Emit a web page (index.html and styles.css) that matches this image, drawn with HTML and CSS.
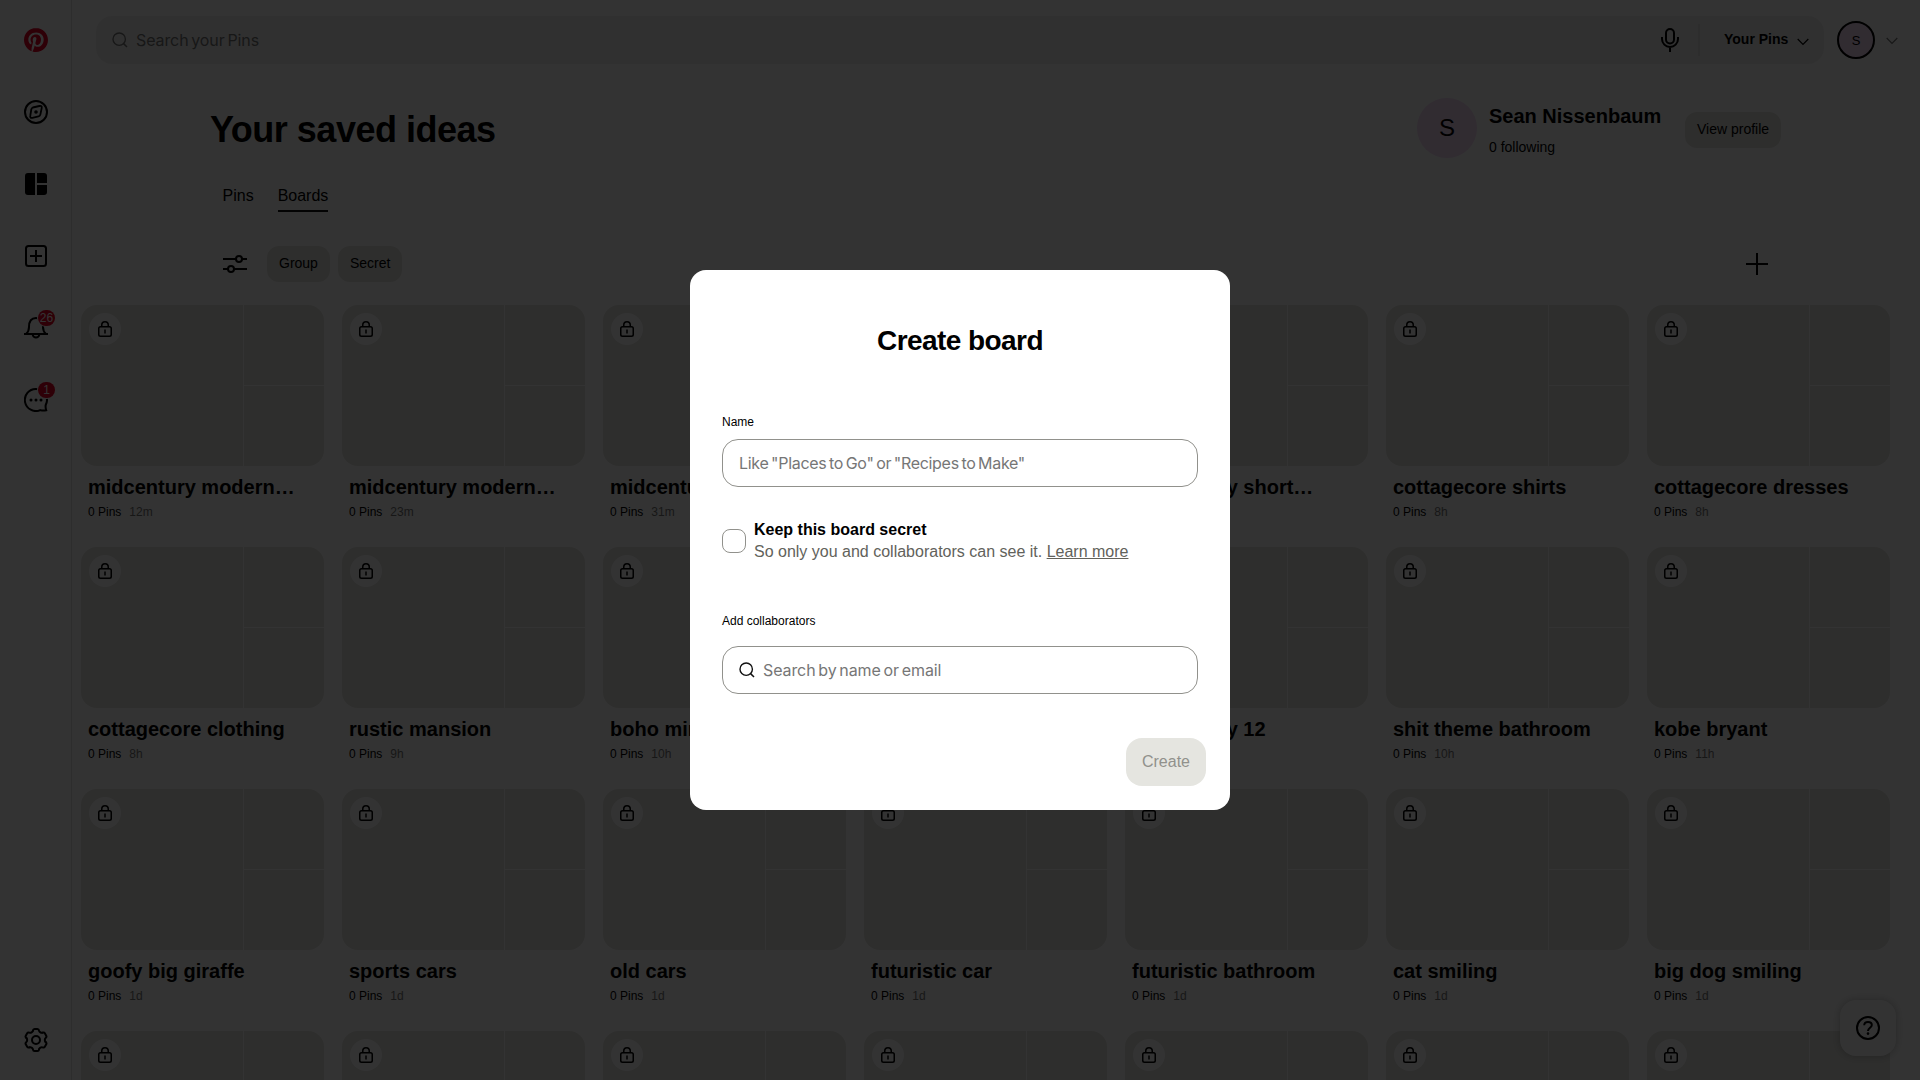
FILE: index.html
```html
<!DOCTYPE html>
<html lang="en">
<head>
<meta charset="utf-8">
<title>Your saved ideas</title>
<link rel="stylesheet" href="styles.css">
</head>
<body>
<svg class="defs" width="0" height="0">
  <symbol id="lock" viewBox="0 0 16 16"><rect x="1.75" y="5.75" width="12.5" height="9.5" rx="1.75" fill="none" stroke="currentColor" stroke-width="1.5"/><path d="M4.75 5.5V4a3.25 3.25 0 0 1 6.5 0v1.5" fill="none" stroke="currentColor" stroke-width="1.5"/><path d="M7.25 8.5h1.5v4h-1.5z" fill="currentColor"/></symbol>
  <symbol id="search" viewBox="0 0 16 16"><circle cx="7.2" cy="7.2" r="6.2" fill="none" stroke="currentColor" stroke-width="1.4"/><path d="M11.6 11.6l3.4 3.4" fill="none" stroke="currentColor" stroke-width="1.5"/></symbol>
  <symbol id="chevron" viewBox="0 0 12 8"><path d="M.7 1L6 6.3 11.3 1" fill="none" stroke="currentColor" stroke-width="1.2"/></symbol>
  <path id="cog-tooth" d="M-3.1-9.300Q-2.800-11-1.400-11H1.400Q2.800-11 3.100-9.300C3.400-7.900 5.140-6.890 6.500-7.330"/>
</svg>

<div class="shell">
  <nav class="sidebar">
    <a class="nav-item"><svg width="24" height="24" viewBox="0 0 24 24"><path fill="#e60023" d="M12.017 0C5.396 0 .029 5.367.029 11.987c0 5.079 3.158 9.417 7.618 11.162-.105-.949-.199-2.403.041-3.439.219-.937 1.406-5.957 1.406-5.957s-.359-.72-.359-1.781c0-1.663.967-2.911 2.168-2.911 1.024 0 1.518.769 1.518 1.688 0 1.029-.653 2.567-.992 3.992-.285 1.193.6 2.165 1.775 2.165 2.128 0 3.768-2.245 3.768-5.487 0-2.861-2.063-4.869-5.008-4.869-3.41 0-5.409 2.562-5.409 5.199 0 1.033.394 2.143.889 2.741.099.12.112.225.085.345-.09.375-.293 1.199-.334 1.363-.053.225-.172.271-.401.165-1.495-.69-2.433-2.878-2.433-4.646 0-3.776 2.748-7.252 7.92-7.252 4.158 0 7.392 2.967 7.392 6.923 0 4.135-2.607 7.462-6.233 7.462-1.214 0-2.354-.629-2.758-1.379l-.749 2.848c-.269 1.045-1.004 2.352-1.498 3.146 1.123.345 2.306.535 3.55.535 6.607 0 11.985-5.365 11.985-11.987C23.97 5.39 18.592.026 11.985.026z"/></svg></a>
    <a class="nav-item"><svg width="24" height="24" viewBox="0 0 24 24" fill="none" stroke="#000" stroke-width="2"><circle cx="12" cy="12" r="11"/><path d="M8.8 7.5l6.6-1.5q2.8-.6 2.3 2.1l-1.3 6.2q-.3 1.7-1.9 2.1l-6.1 1.4q-2.6.5-2.1-2.1l1-6.2q.3-1.6 1.5-2z" stroke-width="1.8"/><circle cx="12" cy="12" r="1.8" fill="#000" stroke="none"/></svg></a>
    <a class="nav-item"><svg width="24" height="24" viewBox="0 0 24 24"><path d="M11 1v22H4a3 3 0 0 1-3-3V4a3 3 0 0 1 3-3zM13 1h7a3 3 0 0 1 3 3v7H13zM13 13h10v7a3 3 0 0 1-3 3h-7z"/></svg></a>
    <a class="nav-item"><svg width="24" height="24" viewBox="0 0 24 24" fill="none" stroke="#000" stroke-width="2"><rect x="2" y="2" width="20" height="20" rx="2.5"/><path d="M12 6v12M6 12h12"/></svg></a>
    <a class="nav-item"><svg width="24" height="24" viewBox="0 0 24 24" fill="none" stroke="#000" stroke-width="2"><path d="M0 18h24"/><path d="M2 18q3-2.5 3-7C5 5 7.500 2 12 2s7 3 7 9q0 4.500 3 7"/><path d="M8.700 18.300a3.300 3.300 0 0 0 6.600 0"/></svg><span class="badge">26</span></a>
    <a class="nav-item"><svg width="24" height="24" viewBox="0 0 24 24"><path d="M12 1a11 11 0 1 0 4.200 21.100q3 .9 6 .2-.9-2.800-.5-5.300A11 11 0 0 0 12 1z" fill="none" stroke="#000" stroke-width="2"/><circle cx="7" cy="12" r="1.500"/><circle cx="12" cy="12" r="1.500"/><circle cx="17" cy="12" r="1.500"/></svg><span class="badge">1</span></a>
    <a class="nav-item settings"><svg width="24" height="24" viewBox="-12 -12 24 24" fill="none" stroke="#000" stroke-width="2" stroke-linecap="round"><use href="#cog-tooth"/><use href="#cog-tooth" transform="rotate(60)"/><use href="#cog-tooth" transform="rotate(120)"/><use href="#cog-tooth" transform="rotate(180)"/><use href="#cog-tooth" transform="rotate(240)"/><use href="#cog-tooth" transform="rotate(300)"/><circle r="4"/></svg></a>
  </nav>

  <main class="main">
    <header class="topbar">
      <div class="searchbar">
        <svg class="search-icon" width="16" height="16"><use href="#search"/></svg>
        <span class="search-text">Search your Pins</span>
        <svg class="mic" width="24" height="24" viewBox="0 0 24 24" fill="none" stroke="#000" stroke-width="2"><rect x="8" y="1" width="8" height="14.500" rx="4"/><path d="M4 9v2a8 8 0 0 0 16 0V9M12 19v5"/></svg>
        <div class="scope"><span>Your Pins</span><svg width="12" height="8"><use href="#chevron"/></svg></div>
      </div>
      <div class="me">S</div>
      <svg class="me-chevron" width="12" height="8"><use href="#chevron"/></svg>
    </header>

    <section class="heading">
      <h1>Your saved ideas</h1>
      <div class="profile">
        <div class="avatar">S</div>
        <div class="who"><div class="name">Sean Nissenbaum</div><div class="following">0 following</div></div>
        <button class="chip">View profile</button>
      </div>
    </section>
    <div class="tabs"><span>Pins</span><span class="active">Boards</span></div>
    <div class="filters">
      <svg width="24" height="24" viewBox="0 0 24 24" fill="none" stroke="#000" stroke-width="2"><path d="M0 7h13M19 7h5M0 17h5M11 17h13"/><circle cx="16" cy="7" r="3"/><circle cx="8" cy="17" r="3"/></svg>
      <button class="chip">Group</button><button class="chip">Secret</button>
      <svg class="plus" width="24" height="24" viewBox="0 0 24 24"><path d="M12 1v22M1 12h22" stroke="#000" stroke-width="2"/></svg>
    </div>

    <section class="boards">
      <article class="board"><div class="cover"><i class="lock"><svg><use href="#lock"/></svg></i></div><h2>midcentury modern…</h2><p>0 Pins<span>12m</span></p></article>
      <article class="board"><div class="cover"><i class="lock"><svg><use href="#lock"/></svg></i></div><h2>midcentury modern…</h2><p>0 Pins<span>23m</span></p></article>
      <article class="board"><div class="cover"><i class="lock"><svg><use href="#lock"/></svg></i></div><h2>midcentury modern…</h2><p>0 Pins<span>31m</span></p></article>
      <article class="board"><div class="cover"><i class="lock"><svg><use href="#lock"/></svg></i></div></article>
      <article class="board"><div class="cover"><i class="lock"><svg><use href="#lock"/></svg></i></div><h2 class="tight">midcentury short…</h2></article>
      <article class="board"><div class="cover"><i class="lock"><svg><use href="#lock"/></svg></i></div><h2>cottagecore shirts</h2><p>0 Pins<span>8h</span></p></article>
      <article class="board"><div class="cover"><i class="lock"><svg><use href="#lock"/></svg></i></div><h2>cottagecore dresses</h2><p>0 Pins<span>8h</span></p></article>

      <article class="board"><div class="cover"><i class="lock"><svg><use href="#lock"/></svg></i></div><h2>cottagecore clothing</h2><p>0 Pins<span>8h</span></p></article>
      <article class="board"><div class="cover"><i class="lock"><svg><use href="#lock"/></svg></i></div><h2>rustic mansion</h2><p>0 Pins<span>9h</span></p></article>
      <article class="board"><div class="cover"><i class="lock"><svg><use href="#lock"/></svg></i></div><h2>boho mirror</h2><p>0 Pins<span>10h</span></p></article>
      <article class="board"><div class="cover"><i class="lock"><svg><use href="#lock"/></svg></i></div></article>
      <article class="board"><div class="cover"><i class="lock"><svg><use href="#lock"/></svg></i></div><h2 class="tight">midcentury 12</h2></article>
      <article class="board"><div class="cover"><i class="lock"><svg><use href="#lock"/></svg></i></div><h2>shit theme bathroom</h2><p>0 Pins<span>10h</span></p></article>
      <article class="board"><div class="cover"><i class="lock"><svg><use href="#lock"/></svg></i></div><h2>kobe bryant</h2><p>0 Pins<span>11h</span></p></article>

      <article class="board"><div class="cover"><i class="lock"><svg><use href="#lock"/></svg></i></div><h2>goofy big giraffe</h2><p>0 Pins<span>1d</span></p></article>
      <article class="board"><div class="cover"><i class="lock"><svg><use href="#lock"/></svg></i></div><h2>sports cars</h2><p>0 Pins<span>1d</span></p></article>
      <article class="board"><div class="cover"><i class="lock"><svg><use href="#lock"/></svg></i></div><h2>old cars</h2><p>0 Pins<span>1d</span></p></article>
      <article class="board"><div class="cover"><i class="lock"><svg><use href="#lock"/></svg></i></div><h2>futuristic car</h2><p>0 Pins<span>1d</span></p></article>
      <article class="board"><div class="cover"><i class="lock"><svg><use href="#lock"/></svg></i></div><h2>futuristic bathroom</h2><p>0 Pins<span>1d</span></p></article>
      <article class="board"><div class="cover"><i class="lock"><svg><use href="#lock"/></svg></i></div><h2>cat smiling</h2><p>0 Pins<span>1d</span></p></article>
      <article class="board"><div class="cover"><i class="lock"><svg><use href="#lock"/></svg></i></div><h2>big dog smiling</h2><p>0 Pins<span>1d</span></p></article>

      <article class="board"><div class="cover"><i class="lock"><svg><use href="#lock"/></svg></i></div></article>
      <article class="board"><div class="cover"><i class="lock"><svg><use href="#lock"/></svg></i></div></article>
      <article class="board"><div class="cover"><i class="lock"><svg><use href="#lock"/></svg></i></div></article>
      <article class="board"><div class="cover"><i class="lock"><svg><use href="#lock"/></svg></i></div></article>
      <article class="board"><div class="cover"><i class="lock"><svg><use href="#lock"/></svg></i></div></article>
      <article class="board"><div class="cover"><i class="lock"><svg><use href="#lock"/></svg></i></div></article>
      <article class="board"><div class="cover"><i class="lock"><svg><use href="#lock"/></svg></i></div></article>
    </section>
  </main>
</div>

<button class="help"><svg width="24" height="24" viewBox="0 0 24 24" fill="none" stroke="#000" stroke-width="2"><circle cx="12" cy="12" r="11"/><path d="M8.200 9.200C8.300 7 9.900 5.900 12 5.900s3.800 1.200 3.800 3.200c0 2.800-3.800 2.700-3.800 6"/><circle cx="12" cy="17.600" r="1.300" fill="#000" stroke="none"/></svg></button>

<div class="overlay">
  <div class="modal">
    <h2 class="modal-title">Create board</h2>
    <label class="label">Name</label>
    <div class="field name-field">Like "Places to Go" or "Recipes to Make"</div>
    <div class="secret">
      <span class="checkbox"></span>
      <div><div class="secret-title">Keep this board secret</div><div class="secret-note">So only you and collaborators can see it. <u>Learn more</u></div></div>
    </div>
    <label class="label">Add collaborators</label>
    <div class="field people"><svg width="16" height="16"><use href="#search"/></svg>Search by name or email</div>
    <button class="create">Create</button>
  </div>
</div>
</body>
</html>
```

FILE: styles.css
```css
* { box-sizing: border-box; }
body { margin: 0; height: 1080px; overflow: hidden; background: #fff; color: #000; font-family: "Liberation Sans", Arial, sans-serif; }
h1, h2, p { margin: 0; }
button { border: 0; font-family: inherit; padding: 0; }
svg { display: block; flex: none; }
.defs { position: absolute; }

.shell { display: flex; height: 1080px; overflow: hidden; }

.sidebar { width: 72px; flex: none; display: flex; flex-direction: column; padding: 4px 0; border-right: 1px solid #e2e2e2; }
.nav-item { position: relative; height: 72px; width: 72px; display: flex; align-items: center; justify-content: center; }
.settings { margin-top: auto; }
.badge { position: absolute; left: 38px; top: 18px; width: 17px; height: 16px; border-radius: 8px; background: #e60023; color: #fff; font-size: 12px; line-height: 17px; text-align: center; box-shadow: 0 0 0 1px #fff; }

.main { flex: 1; min-width: 0; }
.topbar { display: flex; align-items: center; height: 80px; padding-left: 24px; }
.searchbar { width: 1728px; height: 48px; flex: none; display: flex; align-items: center; padding-left: 16px; border-radius: 16px; background: #f1f1f1; }
.search-icon { color: #767676; }
.search-text { margin-left: 8px; flex: 1; color: #767676; font: 16px "Inter", sans-serif; letter-spacing: -0.1px; word-spacing: -1.6px; }
.scope { display: flex; align-items: center; gap: 9px; height: 32px; margin-left: 16px; padding: 0 0 2px 24px; border-left: 2px solid #e0e0e0; font-size: 14px; font-weight: 700; width: 126px; white-space: nowrap; }
.scope svg { margin-top: 6px; }
.me { width: 38px; height: 38px; margin-left: 13px; border: 2px solid #000; border-radius: 50%; background: #f3d9f6; display: flex; align-items: center; justify-content: center; font-size: 13px; }
.me-chevron { margin: 2px 0 0 11px; color: #767676; }

.heading { display: flex; justify-content: space-between; margin: 17px 139px 0 138px; height: 63px; }
h1 { font-size: 36px; line-height: 42px; letter-spacing: -0.5px; margin-top: 12px; }
.profile { display: flex; }
.avatar { width: 60px; height: 60px; margin-top: 1px; border-radius: 50%; background: #f3d9f6; display: flex; align-items: center; justify-content: center; font-size: 24px; }
.who { width: 208px; padding-left: 12px; }
.name { font-size: 20px; font-weight: 700; line-height: 24px; margin-top: 7px; }
.following { font-size: 14px; line-height: 20px; margin-top: 9px; }
.chip { height: 36px; padding: 0 12px 2px; border-radius: 12px; background: #e5e5e0; color: #000; font-size: 14px; white-space: nowrap; }
.profile .chip { margin-top: 15px; width: 96px; }

.tabs { display: flex; gap: 24px; padding: 26px 0 0 150.5px; font-size: 16px; line-height: 20px; }
.tabs span { height: 26px; }
.tabs .active { border-bottom: 2px solid #111; }
.filters { display: flex; align-items: center; height: 36px; margin: 34px 151px 0; }
.filters .chip { margin-right: 8px; }
.filters svg + .chip { margin-left: 20px; }
.filters .plus { margin-left: auto; }

.boards { display: grid; grid-template-columns: repeat(7, 243px); grid-auto-rows: 242px; column-gap: 18px; padding: 23px 0 0 9px; }
.cover { height: 161px; padding: 8px; border-radius: 16px; background: linear-gradient(#fff, #fff) 162px 0 / 1px 100% no-repeat, linear-gradient(#fff, #fff) 162px 80px / 81px 1px no-repeat, #e5e5e0; }
.lock { width: 32px; height: 32px; padding-bottom: 1px; border-radius: 50%; background: #fff; display: flex; align-items: center; justify-content: center; }
.lock svg { width: 16px; height: 16px; }
.board h2 { padding-left: 7px; margin-top: 9px; font-size: 20px; line-height: 24px; white-space: nowrap; }
.board .tight { padding-left: 5px; }
.board p { padding-left: 7px; margin-top: 5px; font-size: 12px; line-height: 16px; }
.board p span { margin-left: 8px; color: #767676; }

.help { position: fixed; right: 24px; bottom: 24px; width: 56px; height: 56px; border-radius: 16px; background: #fff; box-shadow: 0 0 8px rgba(0, 0, 0, .25); display: flex; align-items: center; justify-content: center; }

.overlay { position: fixed; inset: 0; display: flex; align-items: center; justify-content: center; background: rgba(0, 0, 0, .8); }
.modal { width: 540px; height: 540px; padding: 54px 32px 24px; border-radius: 16px; background: #fff; display: flex; flex-direction: column; }
.modal-title { font-size: 28px; line-height: 34px; letter-spacing: -0.02em; text-align: center; margin-bottom: 55px; }
.label { font-size: 12px; line-height: 18px; }
.field { height: 48px; margin-top: 8px; padding: 0 16px; border: 1px solid #91918c; border-radius: 16px; display: flex; align-items: center; color: #767676; font: 16px "Inter", sans-serif; letter-spacing: -0.1px; word-spacing: -1.6px; }
.name-field { letter-spacing: -0.3px; padding-bottom: 1px; }
.secret { display: flex; align-items: center; gap: 8px; margin: 32px 0 49px; height: 44px; font-size: 16px; line-height: 22px; }
.checkbox { width: 24px; height: 24px; border: 1px solid #91918c; border-radius: 8px; }
.secret-title { font-weight: 700; }
.secret-note { color: #62625b; }
.people { margin-top: 16px; gap: 8px; }
.people svg { color: #111; }
.create { align-self: flex-end; margin: auto -8px 0 0; width: 80px; height: 48px; border-radius: 16px; background: #e5e5e0; color: #91918c; font-size: 16px; }
```
